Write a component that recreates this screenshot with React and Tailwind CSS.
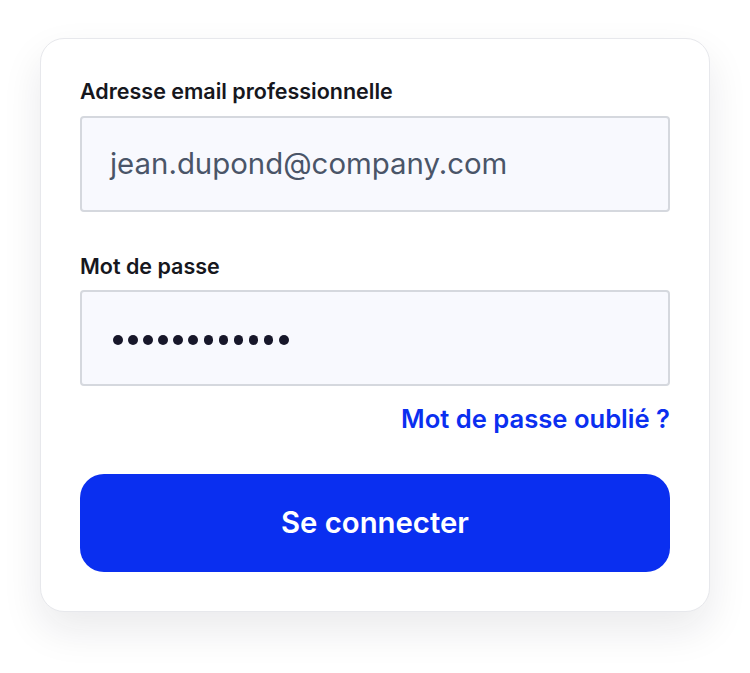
export default function App() {
  return (
    <div className="min-h-screen bg-white font-['Inter',sans-serif]">
      <div className="pt-[38px] pl-[40px]">
        <div className="w-[670px] rounded-[24px] border border-[#e7e8ec] bg-white px-[39px] pt-[40px] pb-[39px] shadow-[0_18px_40px_rgba(17,24,39,0.09)]">
          <label className="block text-[21.5px] leading-[25px] font-semibold text-[#16171d]">
            Adresse email professionnelle
          </label>
          <div className="mt-[12px] flex h-[96px] items-center rounded-[4px] border-2 border-[#d5d8de] bg-[#f8f9fe] pl-[28px]">
            <span className="text-[29.4px] text-[#4a5568]">jean.dupond@company.com</span>
          </div>

          <label className="mt-[42px] block text-[21.5px] leading-[25px] font-semibold text-[#16171d]">
            Mot de passe
          </label>
          <div className="mt-[11px] flex h-[96px] items-center gap-[5.6px] rounded-[4px] border-2 border-[#d5d8de] bg-[#f8f9fe] pt-[4px] pl-[31px]">
            {Array.from({ length: 12 }).map((_, i) => (
              <span key={i} className="h-[9.5px] w-[9.5px] rounded-full bg-[#17172a]" />
            ))}
          </div>

          <div className="mt-[18px] text-right">
            <a className="text-[25.6px] leading-[29px] font-semibold text-[#0b2ff0]">Mot de passe oublié ?</a>
          </div>

          <button className="mt-[40px] flex h-[98px] w-full items-center justify-center rounded-[24px] bg-[#0a2ff0] text-[29.3px] font-semibold text-white">
            Se connecter
          </button>
        </div>
      </div>
    </div>
  );
}
